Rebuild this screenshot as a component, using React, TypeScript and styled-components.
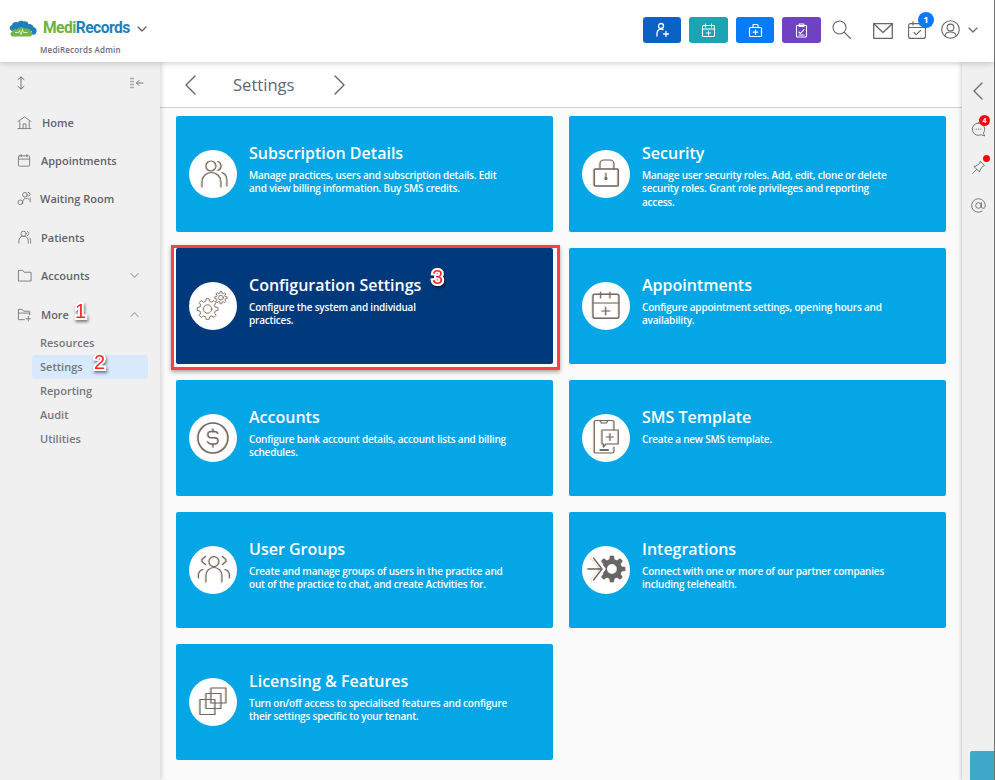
import React from 'react';
import styled, { createGlobalStyle } from 'styled-components';

const GlobalStyle = createGlobalStyle`
  html, body {
    margin: 0;
    padding: 0;
    background: #fafafa;
    font-family: "Open Sans", "Noto Sans", sans-serif;
  }
  * { box-sizing: border-box; }
`;

// builds a cog outline, used by the settings and integrations drawings
const gearPath = (cx: number, cy: number, outer: number, inner: number, teeth: number) => {
  const step = (Math.PI * 2) / teeth;
  const pts: string[] = [];
  for (let i = 0; i < teeth; i++) {
    const a = i * step;
    const corners: [number, number][] = [
      [inner, a - step * 0.32],
      [outer, a - step * 0.18],
      [outer, a + step * 0.18],
      [inner, a + step * 0.32],
    ];
    corners.forEach(([r, t]) => {
      pts.push(`${(cx + r * Math.cos(t)).toFixed(2)} ${(cy + r * Math.sin(t)).toFixed(2)}`);
    });
  }
  return `M${pts.join('L')}Z`;
};

const Page = styled.div`
  width: 995px;
  height: 780px;
  display: flex;
  flex-direction: column;
  overflow: hidden;
  border-right: 1px solid #707070;
  background: #fafafa;
`;

const Header = styled.header`
  height: 62px;
  flex: none;
  display: flex;
  align-items: flex-start;
  justify-content: space-between;
  background: #fff;
  box-shadow: 0 1px 6px rgba(0, 0, 0, 0.22);
  position: relative;
  z-index: 3;
`;

const Brand = styled.div`
  padding: 20px 0 0 9px;
  display: flex;
  flex-direction: column;
`;

const BrandRow = styled.div`
  display: flex;
  align-items: center;
  height: 17px;
  color: #666;
`;

const BrandName = styled.span`
  font-family: Roboto, sans-serif;
  font-size: 15.6px;
  font-weight: 700;
  letter-spacing: -0.55px;
  margin: 0 7px 0 5px;
  color: #6cb33f;
  line-height: 17px;
`;

const BrandBlue = styled.span`
  color: #1f7fbd;
`;

const BrandSub = styled.div`
  font-size: 8px;
  font-weight: 600;
  letter-spacing: 0.2px;
  color: #6a6a7c;
  margin: 7px 0 0 31px;
`;

const Actions = styled.div`
  display: flex;
  align-items: flex-start;
  padding: 17px 16px 0 0;
`;

const ActionButton = styled.button<{ $bg: string; $w: number }>`
  width: ${p => p.$w}px;
  height: 26px;
  margin-right: 8px;
  padding: 0;
  border: 0;
  border-radius: 3px;
  background: ${p => p.$bg};
  color: #fff;
  display: flex;
  align-items: center;
  justify-content: center;
`;

const TopIcon = styled.div<{ $left: number; $top: number }>`
  margin-left: ${p => p.$left}px;
  margin-top: ${p => p.$top}px;
  color: #666;
  display: flex;
  position: relative;
`;

const CountBadge = styled.span`
  position: absolute;
  top: -9px;
  right: -8px;
  width: 16px;
  height: 16px;
  border-radius: 50%;
  background: #0a7bf5;
  color: #fff;
  font-size: 9.5px;
  font-weight: 700;
  line-height: 16px;
  text-align: center;
`;

const Body = styled.div`
  flex: 1;
  display: flex;
  min-height: 0;
`;

const Sidebar = styled.aside`
  width: 160px;
  flex: none;
  background: #f0f0f0;
  box-shadow: 1px 0 5px rgba(0, 0, 0, 0.18);
  position: relative;
  z-index: 2;
`;

const SideTools = styled.div`
  height: 41px;
  padding: 0 16px 0 15px;
  display: flex;
  align-items: center;
  justify-content: space-between;
  color: #777;
`;

const NavRow = styled.div`
  height: 38.4px;
  padding: 0 21px 0 17px;
  display: flex;
  align-items: center;
  position: relative;
  font-size: 11px;
  font-weight: 600;
  color: #5f646b;
  svg:first-child {
    color: #7c7c7c;
    flex: none;
  }
`;

const NavLabel = styled.span<{ $nudge?: number }>`
  margin-left: ${p => 8 + (p.$nudge || 0)}px;
  flex: 1;
`;

const SubList = styled.div`
  margin-top: -2.4px;
  padding: 0 12px 0 32px;
`;

const SubRow = styled.div<{ $active?: boolean }>`
  height: 24px;
  padding-left: 8px;
  border-radius: 3px;
  position: relative;
  display: flex;
  align-items: center;
  font-size: 11px;
  font-weight: 600;
  color: #74787e;
  background: ${p => (p.$active ? '#d9e9fc' : 'transparent')};
`;

const Marker = styled.span<{ $left: number; $top: number }>`
  position: absolute;
  left: ${p => p.$left}px;
  top: ${p => p.$top}px;
  font-family: "Liberation Sans", sans-serif;
  font-size: 20px;
  font-weight: 400;
  line-height: 22px;
  color: #f2292f;
  -webkit-text-stroke: 4px #fff;
  paint-order: stroke fill;
  filter: drop-shadow(1px 2px 1.5px rgba(0, 0, 0, 0.5));
  z-index: 4;
`;

const Main = styled.main`
  flex: 1;
  min-width: 0;
  background: #fafafa;
`;

const Crumbs = styled.div`
  height: 46px;
  background: #fff;
  border-bottom: 1px solid #cfcfcf;
  padding-left: 25px;
  display: flex;
  align-items: center;
  color: #5d6670;
`;

const CrumbTitle = styled.h1`
  margin: 0 39px 0 37px;
  font-size: 16.6px;
  font-weight: 500;
  color: #5f6770;
`;

const CardGrid = styled.div`
  display: grid;
  grid-template-columns: 377px 377px;
  grid-auto-rows: 116px;
  gap: 16px;
  padding: 8px 16px 0;
`;

const Card = styled.div<{ $selected?: boolean }>`
  position: relative;
  display: flex;
  padding-left: 13px;
  border-radius: 2px;
  background: ${p => (p.$selected ? '#013a7c' : '#05a6e6')};
  color: #fff;
`;

const SelectFrame = styled.div`
  position: absolute;
  inset: -3px -7px -6px -5px;
  border: 3px solid #fb4146;
  box-shadow: 0 2px 4px rgba(0, 0, 0, 0.35);
  pointer-events: none;
`;

const IconDisc = styled.div`
  width: 48px;
  height: 48px;
  flex: none;
  align-self: center;
  border-radius: 50%;
  background: #fff;
  display: flex;
  svg {
    filter: drop-shadow(-0.3px 0 0 rgba(225, 140, 60, 0.35));
  }
`;

const CardText = styled.div`
  margin-left: 12px;
  padding-top: 26px;
`;

const CardTitle = styled.h2`
  margin: 0;
  font-size: 16px;
  line-height: 23px;
  font-weight: 600;
`;

const CardDesc = styled.p`
  margin: 4px 0 0;
  font-size: 10px;
  letter-spacing: -0.2px;
  line-height: 13.3px;
  font-weight: 600;
`;

const Rail = styled.aside`
  width: 32px;
  flex: none;
  position: relative;
  background: #f0f0f0;
  box-shadow: -1px 0 4px rgba(0, 0, 0, 0.2);
  display: flex;
  flex-direction: column;
  align-items: flex-start;
  padding: 20px 0 0 9px;
  color: #6c6c6c;
  z-index: 2;
`;

const RailSlot = styled.div<{ $h: number }>`
  height: ${p => p.$h}px;
  display: flex;
  position: relative;
`;

const RedBadge = styled.span`
  position: absolute;
  top: -6px;
  left: 8px;
  width: 11px;
  height: 11px;
  border-radius: 50%;
  background: #f4080f;
  color: #fff;
  font-size: 7px;
  font-weight: 700;
  line-height: 11px;
  text-align: center;
`;

const RedDot = styled.span`
  position: absolute;
  top: -5px;
  left: 12px;
  width: 7px;
  height: 7px;
  border-radius: 50%;
  background: #f4080f;
`;

const RailTab = styled.div`
  position: absolute;
  right: 0;
  bottom: 0;
  width: 24px;
  height: 29px;
  border-radius: 2px 0 0 0;
  background: #3ea9cb;
`;

const Line = styled.svg.attrs({ fill: 'none', stroke: 'currentColor', strokeLinecap: 'round', strokeLinejoin: 'round' })``;

const Art = styled.svg.attrs({ width: 48, height: 48, viewBox: '0 0 48 48', fill: 'none', stroke: '#6a6a6a', strokeLinejoin: 'round', strokeLinecap: 'round' })`
  stroke-width: 1.2;
`;

const Chevron = ({ up, size = 9, color = '#777' }: { up?: boolean; size?: number; color?: string }) => (
  <Line width={size} height={size} viewBox="0 0 10 10" strokeWidth={1.3} style={{ color }}>
    <path d={up ? 'M1 7l4-4 4 4' : 'M1 3l4 4 4-4'} />
  </Line>
);

const icons: Record<string, React.ReactNode> = {
  subscription: (
    <Art>
      <circle cx="22" cy="16" r="5" />
      <path d="M13 37v-5a9.5 9.5 0 0 1 19 0v5" />
      <path d="M29 11.5a4.8 4.8 0 0 1 0 9" />
      <path d="M33 22.5a8 8 0 0 1 5 7.5v6" />
    </Art>
  ),
  security: (
    <Art>
      <rect x="12.3" y="19" width="24" height="17" rx="1" strokeWidth="1.5" />
      <path d="M18 19v-5a4 4 0 0 1 4-4h6a4 4 0 0 1 4 4v5" />
      <path d="M24 23v5" />
      <circle cx="24" cy="28.5" r="1" fill="#6a6a6a" />
    </Art>
  ),
  config: (
    <Art>
      <g strokeWidth="0.8">
        <path d={gearPath(18.7, 27, 10.5, 8, 8)} />
        <circle cx="18.7" cy="27" r="4.2" />
        <path d={gearPath(32, 15.7, 6.2, 4.6, 8)} />
        <circle cx="32" cy="15.7" r="2.4" />
      </g>
    </Art>
  ),
  appointments: (
    <Art>
      <rect x="11" y="12.3" width="26" height="24" rx="2" strokeWidth="1.4" />
      <path d="M11 21h26M18.7 10v6M28 10v6M23.8 25v8M20 29h8" />
    </Art>
  ),
  accounts: (
    <Art>
      <circle cx="24" cy="24" r="15" strokeWidth="1.5" />
      <path d="M29 19.5c-.6-1.3-2-2-3.5-2h-3.2c-2 0-3.4 1.3-3.4 3s1.4 3.2 3.4 3.2h3.4c2 0 3.4 1.3 3.4 3.1s-1.4 3.2-3.4 3.2h-3.4c-1.6 0-3-.8-3.6-2.2M24 15v3M24 30v3" strokeWidth="1.4" />
    </Art>
  ),
  sms: (
    <Art>
      <path d="M32 16V8a1.5 1.5 0 0 0-1.5-1.5H13.8A1.5 1.5 0 0 0 12.300 8v29.500A1.500 1.500 0 0 0 13.800 39h16.700a1.500 1.500 0 0 0 1.500-1.500V33" />
      <path d="M18 6.5l1.500 2.500h5l1.500-2.500" />
      <path d="M18.5 36h7.500" strokeWidth="1.8" />
      <path d="M20 16h16.300v14H24l-2.500 3v-3H20z" />
      <path d="M28 19.5v7M24.5 23h7" />
    </Art>
  ),
  groups: (
    <Art>
      <circle cx="25" cy="15.6" r="5" />
      <path d="M17 36v-6.500a8 8 0 0 1 16 0V36" />
      <path d="M16.5 10.5l-3.500 3v2l3.500 3M33.500 10.500l3.500 3v2l-3.500 3" />
      <path d="M9.5 32v-3a6 6 0 0 1 4.500-5.500M40.500 32v-3a6 6 0 0 0-4.500-5.500" />
    </Art>
  ),
  integrations: (
    <Art>
      <path fillRule="evenodd" fill="#666" stroke="none" d={`${gearPath(30, 23, 13.5, 10, 8)}M30 18a5 5 0 1 0 0 10a5 5 0 1 0 0-10Z`} />
      <path d="M12 12l9 11-9 11" stroke="#fff" strokeWidth="5" />
      <path d="M6 23h14M11.5 12l8.500 11-8.500 11" strokeWidth="1.4" />
    </Art>
  ),
  licensing: (
    <Art>
      <rect x="11" y="21.5" width="15" height="15" />
      <rect x="17" y="15.5" width="15" height="15" />
      <rect x="22" y="10" width="15" height="15" />
    </Art>
  ),
};

const cards = [
  { key: 'subscription', title: 'Subscription Details', lines: ['Manage practices, users and subscription details. Edit', 'and view billing information. Buy SMS credits.'] },
  { key: 'security', title: 'Security', lines: ['Manage user security roles. Add, edit, clone or delete', 'security roles. Grant role privileges and reporting', 'access.'] },
  { key: 'config', title: 'Configuration Settings', lines: ['Configure the system and individual', 'practices.'], selected: true },
  { key: 'appointments', title: 'Appointments', lines: ['Configure appointment settings, opening hours and', 'availability.'] },
  { key: 'accounts', title: 'Accounts', lines: ['Configure bank account details, account lists and billing', 'schedules.'] },
  { key: 'sms', title: 'SMS Template', lines: ['Create a new SMS template.'] },
  { key: 'groups', title: 'User Groups', lines: ['Create and manage groups of users in the practice and', 'out of the practice to chat, and create Activities for.'] },
  { key: 'integrations', title: 'Integrations', lines: ['Connect with one or more of our partner companies', 'including telehealth.'] },
  { key: 'licensing', title: 'Licensing & Features', lines: ['Turn on/off access to specialised features and configure', 'their settings specific to your tenant.'] },
];

const navIcons = {
  home: <path d="M1 7l7-5 7 5M3 7v7M13 7v7M1 14.5h14M6.5 14V9.500h3V14" />,
  appt: <><rect x="1.5" y="3" width="12" height="11" rx="1" /><path d="M1.5 6.5h12M4.5 1.5v2.500M10.500 1.500v2.500" /></>,
  wait: <><circle cx="8.5" cy="4" r="2.5" /><path d="M6 13.5v-2a4 4 0 0 1 7-2.500M12 1.500a2 2 0 0 1 0 4M14 7.500v4" /><circle cx="3.5" cy="12" r="2.5" /></>,
  patients: <><circle cx="7" cy="4" r="2.8" /><path d="M2 14v-2.500a5 5 0 0 1 10 0V14M11 1.500a2.400 2.400 0 0 1 0 4.500M13.500 8.500a3 3 0 0 1 1 2.500v3" /></>,
  folder: <path d="M1.5 13.5v-11h4.500l1.500 2h7.500v9z" />,
  more: <path d="M8 13.5H1.500v-11h4l1.500 2h6.500v4M1.500 6.500h12M12 10v5M9.500 12.500h5" />,
};

const NavIcon = ({ children }: { children: React.ReactNode }) => (
  <Line width="15" height="15" viewBox="0 0 16 16" strokeWidth={1}>{children}</Line>
);

const navItems = [
  { label: 'Home', icon: navIcons.home, nudge: 2 },
  { label: 'Appointments', icon: navIcons.appt, nudge: 1 },
  { label: 'Waiting Room', icon: navIcons.wait },
  { label: 'Patients', icon: navIcons.patients, nudge: 1 },
];

export default function App() {
  return (
    <Page>
      <GlobalStyle />
      <Header>
        <Brand>
          <BrandRow>
            <svg width="29" height="17" viewBox="0 0 29 17">
              <path d="M3 11c-3-1-3-5 0-6 .5-2.500 3.500-3.500 5.500-2.500C10 .5 13 0 15 1.500c2-.5 4 .5 4.500 2.500 2.500-.5 4.500 1 5 3 2.500.5 3.500 3 3 5-.5 2-2 3-4 3l-1-4z" fill="#1f7fbd" />
              <path d="M4 16.500c-3 0-3.500-4-.5-5 .5-2.500 3-3 4.500-2 1.500-2.500 6-3 8-.5 2-1 5-.5 5.500 2 2 .5 2.500 4.500 0 5.500z" fill="#72b544" />
              <path d="M6 12.500h3.500l1-2 1.500 4 1.500-5 1 3h4" fill="none" stroke="#fff" strokeWidth=".7" />
            </svg>
            <BrandName>Medi<BrandBlue>Records</BrandBlue></BrandName>
            <Chevron size={10} color="#666" />
          </BrandRow>
          <BrandSub>MediRecords Admin</BrandSub>
        </Brand>
        <Actions>
          <ActionButton $bg="#0b62c4" $w={38}>
            <Line width="15" height="16" viewBox="0 0 15 16" strokeWidth={1.3}>
              <circle cx="6" cy="4" r="2.5" /><path d="M2 14v-3a4 4 0 0 1 6-3.400M11 9.500v5M8.500 12h5" />
            </Line>
          </ActionButton>
          <ActionButton $bg="#1ca3b4" $w={39}>
            <Line width="15" height="15" viewBox="0 0 15 15" strokeWidth={1.1}>
              <rect x="1.5" y="2.5" width="12" height="11" rx="1" /><path d="M1.5 6h12M4.500 1v3M10.500 1v3M7.500 8v4M5.500 10h4" />
            </Line>
          </ActionButton>
          <ActionButton $bg="#0a7bf8" $w={38}>
            <Line width="15" height="15" viewBox="0 0 15 15" strokeWidth={1.2}>
              <rect x="1.5" y="4.5" width="12" height="9" rx="1" /><path d="M5 4.500V2.500a1 1 0 0 1 1-1h3a1 1 0 0 1 1 1v2M7.500 7v4.500M5.300 9.200h4.400" />
            </Line>
          </ActionButton>
          <ActionButton $bg="#6f42c1" $w={39}>
            <Line width="15" height="15" viewBox="0 0 15 15" strokeWidth={1.1}>
              <rect x="2.5" y="2.5" width="10" height="11.5" rx=".6" /><rect x="5.2" y="1" width="4.6" height="2.5" /><path d="M5 9l1.500 1.500L10 6.500M5 12h5" />
            </Line>
          </ActionButton>
          <TopIcon $left={3} $top={3}>
            <Line width="19" height="19" viewBox="0 0 19 19" strokeWidth={1.1}>
              <circle cx="7.5" cy="7.5" r="6.5" /><path d="M12.500 12.500L18.500 18.500" />
            </Line>
          </TopIcon>
          <TopIcon $left={22} $top={6}>
            <Line width="20" height="16" viewBox="0 0 20 16" strokeWidth={1.3}>
              <rect x=".7" y=".7" width="18.6" height="14.6" /><path d="M.7 .7L10 9.500 19.300 .7" />
            </Line>
          </TopIcon>
          <TopIcon $left={15} $top={4}>
            <Line width="18" height="18" viewBox="0 0 18 18" strokeWidth={1.1}>
              <rect x=".6" y="2.6" width="16.8" height="14.8" rx="2" /><path d="M.6 6.500h16.800M5 .6v3.500M12 .6v3.500M6 11.500l2.200 2.200L12.500 9.500" />
            </Line>
            <CountBadge>1</CountBadge>
          </TopIcon>
          <TopIcon $left={15} $top={3}>
            <Line width="19" height="19" viewBox="0 0 19 19" strokeWidth={1.1}>
              <circle cx="9.5" cy="9.5" r="8.8" /><circle cx="9.5" cy="7.5" r="3.4" /><path d="M3.800 15.800c.6-2.700 2.800-3.800 5.700-3.800s5.100 1.100 5.700 3.800" />
            </Line>
          </TopIcon>
          <TopIcon $left={8} $top={8}>
            <Chevron size={10} color="#6c6c6c" />
          </TopIcon>
        </Actions>
      </Header>
      <Body>
        <Sidebar>
          <SideTools>
            <Line width="12" height="14" viewBox="0 0 12 14" strokeWidth={1}>
              <path d="M6 1v12M3 3.500L6 1l3 2.500M3 10.500L6 13l3-2.500" />
            </Line>
            <Line width="15" height="12" viewBox="0 0 15 12" strokeWidth={1}>
              <path d="M1 1.500h4M1 4.500h4M1 7.500h4M1 10.500h4" stroke="#aaa" strokeWidth="1.5" strokeLinecap="butt" />
              <path d="M14 6H7.500M10 3.500L7.500 6 10 8.500" />
            </Line>
          </SideTools>
          {navItems.map(item => (
            <NavRow key={item.label}>
              <NavIcon>{item.icon}</NavIcon>
              <NavLabel $nudge={item.nudge}>{item.label}</NavLabel>
            </NavRow>
          ))}
          <NavRow>
            <NavIcon>{navIcons.folder}</NavIcon>
            <NavLabel $nudge={1}>Accounts</NavLabel>
            <Chevron color="#aaa" />
          </NavRow>
          <NavRow>
            <NavIcon>{navIcons.more}</NavIcon>
            <NavLabel $nudge={1}>More</NavLabel>
            <Chevron up color="#aaa" />
            <Marker $left={75} $top={5}>1</Marker>
          </NavRow>
          <SubList>
            <SubRow $active={false}>Resources</SubRow>
            <SubRow $active>
              Settings
              <Marker $left={62} $top={-4}>2</Marker>
            </SubRow>
            <SubRow>Reporting</SubRow>
            <SubRow>Audit</SubRow>
            <SubRow>Utilities</SubRow>
          </SubList>
        </Sidebar>
        <Main>
          <Crumbs>
            <Line width="11" height="20" viewBox="0 0 11 20" strokeWidth={1.4}><path d="M10 1L1 10l9 9" /></Line>
            <CrumbTitle>Settings</CrumbTitle>
            <Line width="11" height="20" viewBox="0 0 11 20" strokeWidth={1.4}><path d="M1 1l9 9-9 9" /></Line>
          </Crumbs>
          <CardGrid>
            {cards.map(card => (
              <Card key={card.key} $selected={card.selected}>
                <IconDisc>{icons[card.key]}</IconDisc>
                <CardText>
                  <CardTitle>{card.title}</CardTitle>
                  <CardDesc>
                    {card.lines.map(l => (
                      <React.Fragment key={l}>{l}<br /></React.Fragment>
                    ))}
                  </CardDesc>
                </CardText>
                {card.selected && (
                  <>
                    <SelectFrame />
                    <Marker $left={256} $top={18}>3</Marker>
                  </>
                )}
              </Card>
            ))}
          </CardGrid>
        </Main>
        <Rail>
          <RailSlot $h={39}>
            <Line width="10" height="18" viewBox="0 0 10 18" strokeWidth={1.3} style={{ marginLeft: 2 }}><path d="M9 1L1 9l8 8" /></Line>
          </RailSlot>
          <RailSlot $h={39}>
            <Line width="15" height="15" viewBox="0 0 15 15" strokeWidth={.9} style={{ marginTop: 1 }}>
              <path d="M7.500 1a6.200 6.200 0 0 1 6.200 6.200c0 1.500-.5 2.800-1.300 3.900l1.300 2.900-3.400-1.300a6.200 6.200 0 1 1-2.800-11.700z" />
              <path d="M5 7.200h.5M7.300 7.200h.5M9.600 7.200h.5" />
            </Line>
            <RedBadge>4</RedBadge>
          </RailSlot>
          <RailSlot $h={38}>
            <Line width="15" height="15" viewBox="0 0 15 15" strokeWidth={.9}>
              <path d="M9.500 1.500L13.500 5.500 11.500 6.500 9 10 8.500 12 3 6.500 5 6 8.500 3.500zM5.500 9.500L1.500 13.500" />
            </Line>
            <RedDot />
          </RailSlot>
          <RailSlot $h={20}>
            <Line width="15" height="15" viewBox="0 0 15 15" strokeWidth={.9}>
              <circle cx="7.5" cy="7.5" r="2.8" />
              <path d="M10.300 4.700v4a2 2 0 0 0 3.700 .6A6.800 6.800 0 1 0 11 13.300" />
            </Line>
          </RailSlot>
          <RailTab />
        </Rail>
      </Body>
    </Page>
  );
}
